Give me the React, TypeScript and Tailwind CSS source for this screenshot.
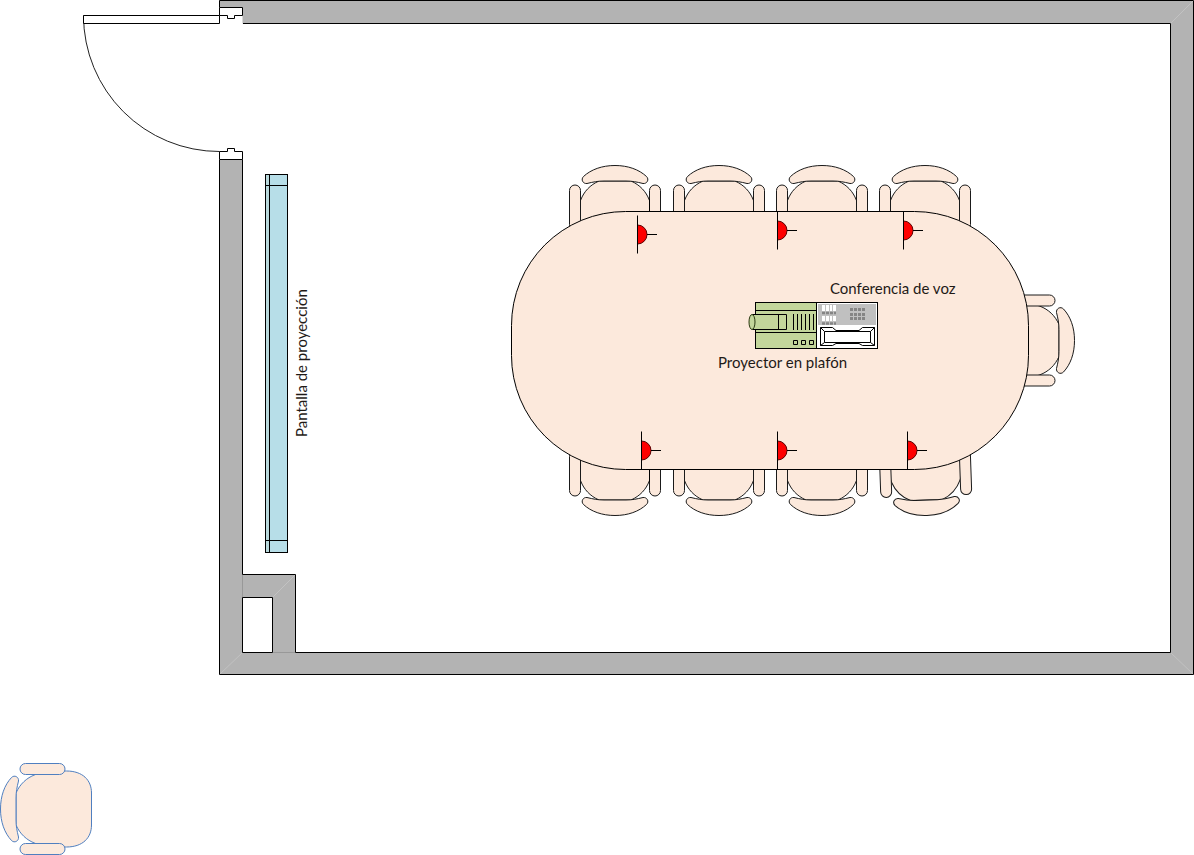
import React from "react";

const SKIN = "#fce9dc";
const WALL = "#b3b3b3";

type ChairProps = { x: number; y: number; turn?: number; stroke?: string };

function Chair({ x, y, turn = 0, stroke = "#1a1a1a" }: ChairProps) {
  return (
    <g transform={`translate(${x} ${y}) rotate(${turn})`} fill={SKIN} stroke={stroke}>
      <path d="M-16 15.5C-25 19.5 -31 26 -34.3 34.5C-37 41 -38 48 -38 57V66C-38 82 -29 91 -16 91H16C29 91 38 82 38 66V57C38 48 37 41 34.3 34.5C31 26 25 19.5 16 15.5Z" />
      <path d="M0 0C-13 0 -24 4 -31.5 11C-34.5 14 -32 18.5 -28 18C-22 16.5 -17 15.5 -11 15.5H11C17 15.5 22 16.5 28 18C32 18.5 34.5 14 31.5 11C24 4 13 0 0 0Z" />
      <rect x="-45.5" y="19.5" width="11" height="45" rx="5.5" />
      <rect x="34.5" y="19.5" width="11" height="45" rx="5.5" />
    </g>
  );
}

function Microphone({ x, y, top }: { x: number; y: number; top: number }) {
  return (
    <g stroke="#000">
      <path d={`M${x} ${y - 9.5}A9.5 9.5 0 0 1 ${x} ${y + 9.5}Z`} fill="#fe0000" stroke="#5a0000" />
      <path d={`M${x} ${top}V${top + 38}M${x + 9.5} ${y}H${x + 19.5}`} fill="none" />
    </g>
  );
}

function Walls() {
  return (
    <g>
      <path
        d="M219.5 7.5V.5H1193.5V674.5H219.5V159.5H242.5V574.5H295.5V652.5H1170.5V23.5H242.5V7.5Z"
        fill={WALL}
      />
      <path d="M242.5 597.5H272.5V652.5H242.5Z" fill="#fff" stroke="#000" />
      <path
        d="M219.5 7.5V.5H1193.5V674.5H219.5V159.5M242.5 159.5V574.5H295.5V652.5H1170.5V23.5H243"
        fill="none"
        stroke="#000"
      />
      <path
        d="M220 674L242 653M1171 23L1193 1M1171 653L1193 674M273 597L295 575"
        stroke="#c2c2c2"
      />
      <path d="M242.5 575V597M273 652.5H295" stroke="#989898" />
    </g>
  );
}

function Door() {
  return (
    <g fill="#fff" stroke="#000">
      <path d="M83.5 15.5A136 136 0 0 0 219.5 151.5" fill="none" stroke="#222" />
      <path d="M83.5 15.5H219.5V23.5H83.5Z" />
      <path d="M219.5 7.5H242.5V15.5H234.5V18.5H227.5V15.5H219.5Z" />
      <path d="M219.5 151.5H227.5V148.5H234.5V151.5H242.5V159.5H219.5Z" />
    </g>
  );
}

function Screen() {
  return (
    <g stroke="#000">
      <rect x="265.5" y="174.5" width="22" height="378" fill="#b7dee8" />
      <path d="M266 175H269V552H266Z" fill="#b9d9dc" stroke="none" />
      <path d="M269.5 175V552M266 185.5H287M266 540.5H287" />
    </g>
  );
}

function Projector() {
  return (
    <g stroke="#000" fill="#c3d69b">
      <rect x="755.5" y="302.5" width="61" height="46" />
      <path d="M756 310.5H816M756 332.5H816" />
      <path d="M752.5 314.5H786.5V329.5H752.5ZM778.5 315V329" />
      <ellipse cx="752" cy="322" rx="3" ry="7.5" stroke="#2c3a12" />
      <path d="M793.5 314V330M797.5 314V330M801.5 314V330M805.5 314V330M809.5 314V330M813.5 314V330" />
      <path d="M793.5 340.5h4v4h-4ZM801.5 340.5h4v4h-4ZM809.5 340.5h4v4h-4Z" />
    </g>
  );
}

function Phone() {
  return (
    <g fill="#fff" stroke="#000">
      <rect x="816.5" y="302.5" width="61" height="46" />
      <path d="M818 304H876V325H818Z" fill="#c0c0c0" stroke="none" />
      <path d="M822 305h3v6h-3ZM826 305h3v6h-3ZM830 305h2v6h-2ZM833 305h3v6h-3ZM822 316h3v5h-3ZM826 316h3v5h-3ZM830 316h2v5h-2ZM833 316h3v5h-3Z" stroke="none" />
      <path d="M822 313H836M822 323.5H836" stroke="#858585" strokeWidth="2.5" strokeDasharray="3 1" />
      <path d="M850 309.5H865M850 314.5H865M850 318.5H865" stroke="#858585" strokeWidth="3" strokeDasharray="3 1" />
      <path d="M820.5 327.5H832.5L836 330.5H859L862.5 327.5H874.5V345.5H862.5L859 343.5H836L832.5 345.5H820.5Z" />
      <path d="M824.5 331.5H870.5V342.5H824.5ZM820.5 327.5L824.5 331.5M874.5 327.5L870.5 331.5M820.5 345.5L824.5 342.5M874.5 345.5L870.5 342.5" />
    </g>
  );
}

export default function App() {
  return (
    <main className="w-full bg-white">
      <svg
        viewBox="0 0 1194 855"
        className="block h-auto w-full"
        role="group"
        strokeWidth="1"
      >
        <Walls />
        <Door />
        <Screen />

        {[615, 719, 822, 925].map((x) => (
          <Chair key={x} x={x} y={165.5} />
        ))}
        {[615, 719, 822].map((x) => (
          <Chair key={x} x={x} y={515.5} turn={180} />
        ))}
        <Chair x={927} y={515.5} turn={178} />
        <Chair x={1074.5} y={340.5} turn={90} />
        <Chair x={0.5} y={809} turn={-90} stroke="#4f7fc0" />
        <path d="M649.5 199V211M649.5 470V482" stroke="#000" />

        <rect x="511.5" y="211.5" width="517" height="258" rx="114" fill={SKIN} stroke="#000" />

        <Microphone x={637.5} y={234.5} top={215.5} />
        <Microphone x={777.5} y={230.5} top={211.5} />
        <Microphone x={903.5} y={230.5} top={211.5} />
        <Microphone x={641.5} y={450.5} top={431.5} />
        <Microphone x={777.5} y={450.5} top={431.5} />
        <Microphone x={907.5} y={450.5} top={431.5} />

        <Projector />
        <Phone />

        <g className="font-[Lato,sans-serif] text-[15px]" fill="#1f1a17">
          <text x="830" y="294">Conferencia de voz</text>
          <text x="718" y="368">Proyector en plafón</text>
          <text transform="translate(307 437) rotate(-90)">Pantalla de proyección</text>
        </g>
      </svg>
    </main>
  );
}
